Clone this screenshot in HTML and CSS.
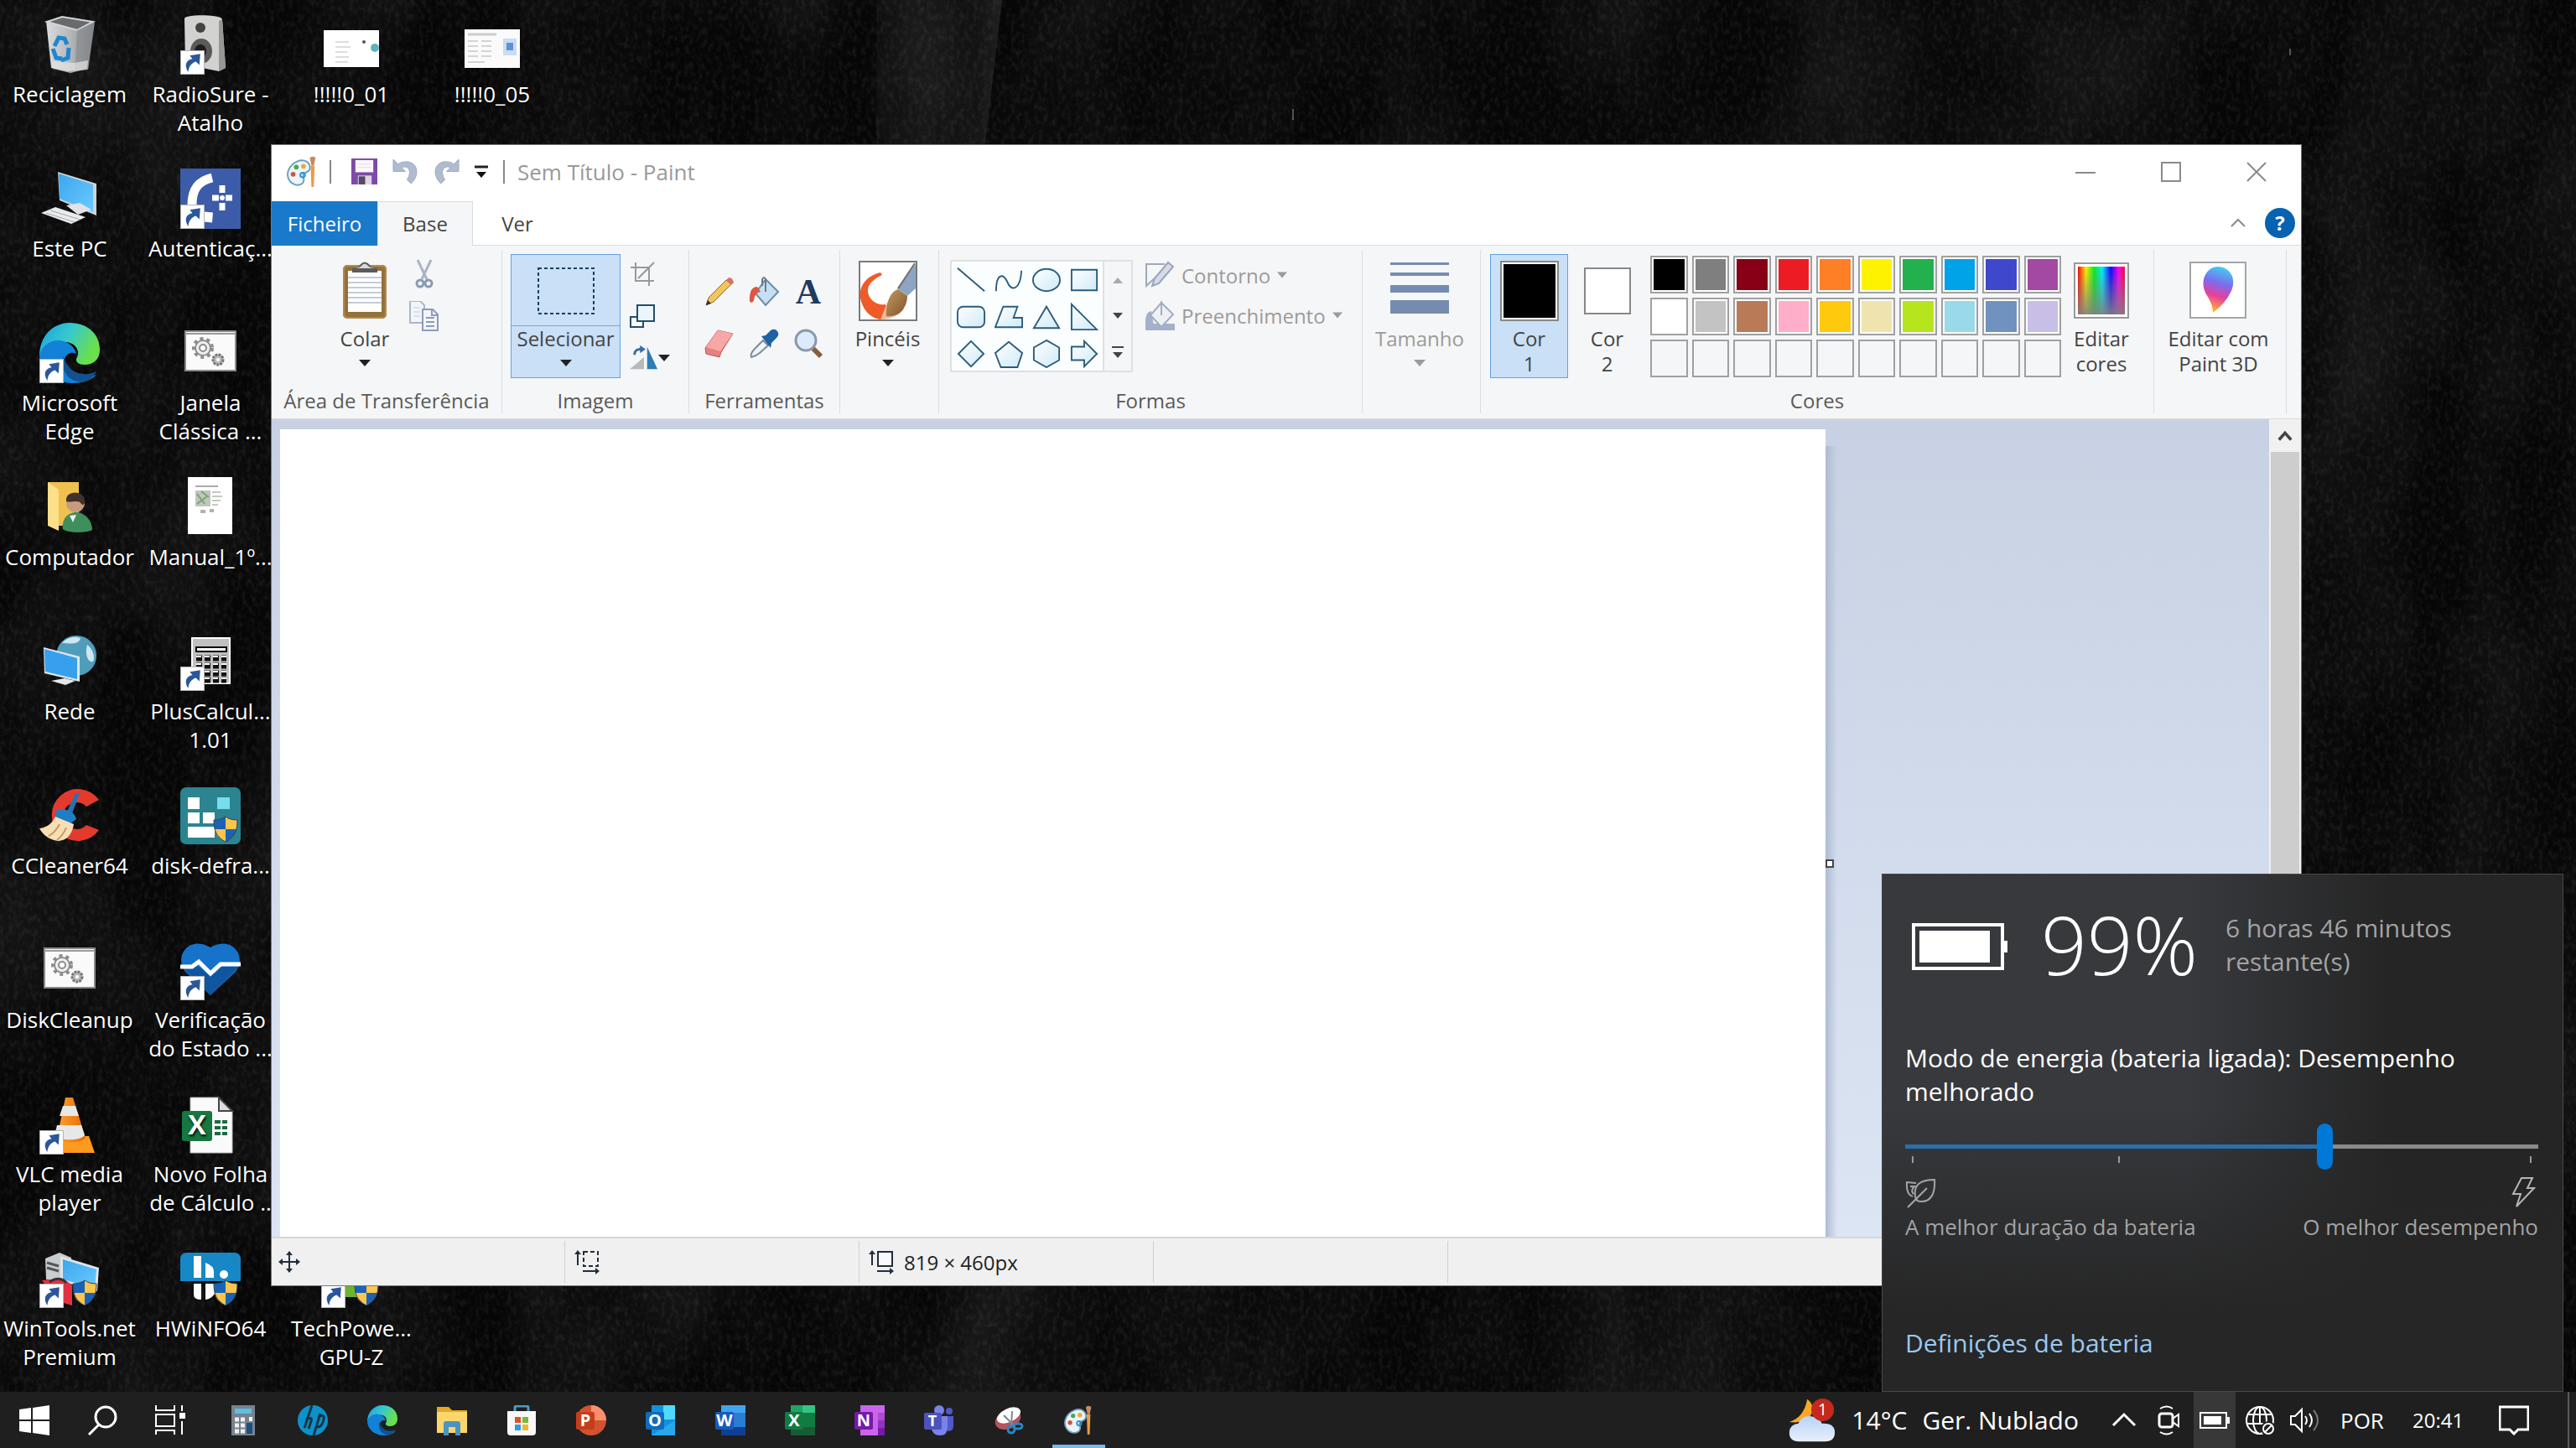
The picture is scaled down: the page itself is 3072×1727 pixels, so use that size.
FILE: index.html
```html
<!DOCTYPE html>
<html lang="pt">
<head>
  <meta charset="UTF-8">
  <title>Sem Título - Paint</title>
  <link rel="stylesheet" href="styles.css">
</head>
<body>

  <!-- shared symbols and gradients -->
  <svg class="defs" aria-hidden="true">
    <defs>
      <linearGradient id="gEdge" x1="0" y1="0" x2="1" y2="0.4"><stop offset="0" stop-color="#1b9de2"/><stop offset="0.5" stop-color="#35c8cf"/><stop offset="1" stop-color="#6be04a"/></linearGradient>
      <linearGradient id="gScreen" x1="0" y1="0" x2="1" y2="1"><stop offset="0" stop-color="#3aa7ee"/><stop offset="1" stop-color="#6cc9ff"/></linearGradient>
      <linearGradient id="gShape" x1="0" y1="0" x2="1" y2="1"><stop offset="0" stop-color="#fff"/><stop offset="1" stop-color="#cfeaf6"/></linearGradient>
      <linearGradient id="gBin" x1="0" y1="0" x2="1" y2="0"><stop offset="0" stop-color="#d9dbdd"/><stop offset="0.5" stop-color="#b4b7ba"/><stop offset="1" stop-color="#7f8386"/></linearGradient>
      <linearGradient id="gCone" x1="0" y1="0" x2="1" y2="0"><stop offset="0" stop-color="#ffa033"/><stop offset="1" stop-color="#e66a00"/></linearGradient>
      <linearGradient id="gRainbow" x1="0" y1="0" x2="1" y2="0"><stop offset="0" stop-color="#f00"/><stop offset="0.17" stop-color="#fe0"/><stop offset="0.35" stop-color="#0e2"/><stop offset="0.52" stop-color="#0ef"/><stop offset="0.7" stop-color="#10f"/><stop offset="0.87" stop-color="#f0e"/><stop offset="1" stop-color="#f03"/></linearGradient>
      <linearGradient id="gGrey" x1="0" y1="0" x2="0" y2="1"><stop offset="0" stop-color="#808080" stop-opacity="0"/><stop offset="1" stop-color="#808080" stop-opacity="0.9"/></linearGradient>
      <linearGradient id="gDrop" x1="0.6" y1="0" x2="0.4" y2="1"><stop offset="0" stop-color="#3fd0f0"/><stop offset="0.35" stop-color="#7b6cf0"/><stop offset="0.65" stop-color="#e8409a"/><stop offset="1" stop-color="#ffc020"/></linearGradient>
      <linearGradient id="gCloud" x1="0" y1="0" x2="0" y2="1"><stop offset="0" stop-color="#b9d3f7"/><stop offset="1" stop-color="#e6effc"/></linearGradient>
      <linearGradient id="gBrush" x1="0" y1="0" x2="1" y2="1"><stop offset="0" stop-color="#c39a62"/><stop offset="1" stop-color="#7d5329"/></linearGradient>
      <linearGradient id="gStreak" x1="0" y1="0" x2="1" y2="0"><stop offset="0" stop-color="#fff" stop-opacity="0.03"/><stop offset="0.8" stop-color="#fff" stop-opacity="0.05"/><stop offset="1" stop-color="#fff" stop-opacity="0.1"/></linearGradient>
      <filter id="clouds" x="0" y="0" width="100%" height="100%" color-interpolation-filters="sRGB">
        <feTurbulence type="fractalNoise" baseFrequency="0.008 0.004" numOctaves="4" seed="8"/>
        <feColorMatrix values="0 0 0 0 1  0 0 0 0 1  0 0 0 0 1  0.12 0 0 0 -0.04"/>
      </filter>
      <filter id="grain" x="0" y="0" width="100%" height="100%" color-interpolation-filters="sRGB">
        <feTurbulence type="fractalNoise" baseFrequency="0.18 0.12" numOctaves="3" seed="3"/>
        <feColorMatrix values="0 0 0 0 1  0 0 0 0 1  0 0 0 0 1  0.16 0 0 0 -0.07"/>
      </filter>
    </defs>

    <symbol id="shortcut" viewBox="0 0 28 28">
      <rect x="0.5" y="0.5" width="27" height="27" fill="#fff" stroke="#b5b5b5"/>
      <path d="M9 25C4 17 7 11 14 10L11 6l12-2-1 13-4-4c-6 2-8 6-9 12z" fill="#2b579a"/>
    </symbol>
    <symbol id="shield" viewBox="0 0 30 32">
      <path d="M15 1c4 3 9 4 14 4 0 13-3 20-14 26C4 25 1 18 1 5c5 0 10-1 14-4z" fill="#1b62b5"/>
      <path d="M15 1c4 3 9 4 14 4l-1 11H15zM15 16v15C7 27 3 23 2 16z" fill="#fcc54c"/>
      <path d="M15 1c4 3 9 4 14 4 0 13-3 20-14 26C4 25 1 18 1 5c5 0 10-1 14-4z" fill="none" stroke="#35424f"/>
    </symbol>
    <symbol id="edge" viewBox="0 0 72 72">
      <path d="M36 0c22 0 36 14 36 32 0 12-8 18-18 18-9 0-12-5-9-9 4-8-3-18-14-18C14 23 3 33 0 40 0 16 16 0 36 0z" fill="url(#gEdge)"/>
      <path d="M0 38c3-10 12-17 22-17 11 0 20 7 22 16-8-4-16 3-14 13 2 12 18 19 38 12-7 7-17 10-29 10C17 72 0 56 0 38z" fill="#1381d6"/>
      <path d="M29 40c-5 14 4 31 24 31 7-3 13-8 15-13-14 7-34 3-39-18z" fill="#12508f"/>
    </symbol>
    <symbol id="palette" viewBox="0 0 40 40">
      <path d="M14 7c9-4 17 1 16 9-1 5-6 4-8 7-2 4 3 6-1 11-5 5-15 2-18-6C0 20 5 11 14 7z" fill="#eaf5fb" stroke="#6d9fbb" stroke-width="2"/>
      <circle cx="13" cy="14" r="3" fill="#4aa84f"/><circle cx="22" cy="13" r="3" fill="#eda73a"/><circle cx="9" cy="23" r="3" fill="#d4533f"/><circle cx="21" cy="24" r="3" fill="none" stroke="#2f8fd0" stroke-width="2"/>
      <path d="M31 12h5l-1 27h-3z" fill="#eb9c46"/>
      <path d="M30 3c0-3 7-3 7 0l-2 9h-3z" fill="#c98a5d"/>
    </symbol>
    <symbol id="gears" viewBox="0 0 62 50">
      <rect x="1" y="1" width="60" height="47" fill="#fafafa" stroke="#8b8b8b" stroke-width="2"/>
      <path d="M1 4h60" stroke="#9a9a9a" stroke-width="2"/>
      <circle cx="22" cy="21" r="11" fill="none" stroke="#8d8d8d" stroke-width="4" stroke-dasharray="4 4"/>
      <circle cx="22" cy="21" r="9" fill="#efefef" stroke="#8d8d8d" stroke-width="2"/><circle cx="22" cy="21" r="4" fill="#fff" stroke="#8d8d8d" stroke-width="2"/>
      <circle cx="40" cy="35" r="6" fill="#bbb" stroke="#777" stroke-width="3" stroke-dasharray="3 1"/><circle cx="40" cy="35" r="2" fill="#fff"/>
    </symbol>
    <symbol id="down" viewBox="0 0 14 8"><path d="M0 0h14L7 8z" fill="currentColor"/></symbol>
  </svg>

  <main class="desktop">
    <svg class="wallpaper" aria-hidden="true">
      <rect width="100%" height="100%" filter="url(#clouds)"/>
      <rect width="100%" height="100%" filter="url(#grain)"/>
      <path d="M1045 0h150l-20 172h-130z" fill="url(#gStreak)"/>
      <path d="M1542 130v13M2731 58v8" stroke="#999" stroke-width="1"/>
    </svg>

    <div class="icons">
      <button class="item">
        <svg viewBox="0 0 72 72"><path d="M8 8l42-2 16 4-8 56-24 2-20-4z" fill="url(#gBin)"/><path d="M9 9l18-6 37 6-19 10z" fill="#6a6a6a" stroke="#d4d6d8" stroke-width="2"/><path d="M45 19l19-9-6 56-16 2z" fill="#85898c" opacity="0.6"/><path d="M14 56l28 2 16-3-1 10-20 5-21-5z" fill="#e3e4e5" opacity="0.7"/><path d="M18 38l5-10 7 1 3 7M16 41l4 11 7 1M35 40l-1 12-8 3" fill="none" stroke="#1e86d0" stroke-width="5"/></svg>
        <span>Reciclagem</span>
      </button>
      <button class="item">
        <svg viewBox="0 0 72 72"><path d="M5 5C6 0 48 0 50 6l4 58-8 4-40-8z" fill="#d2d2d0"/><path d="M50 6l4 58-8 4V8z" fill="#979797"/><circle cx="24" cy="16" r="6" fill="#444"/><ellipse cx="25" cy="44" rx="13" ry="15" fill="#5a5a5a"/><ellipse cx="24" cy="44" rx="7" ry="8" fill="#1d1d1d"/><use href="#shortcut" x="0" y="43" width="29" height="29"/></svg>
        <span>RadioSure -<br>Atalho</span>
      </button>
      <button class="item">
        <svg viewBox="0 0 72 72"><path d="M22 4l46 14v38l-44-18z" fill="#cdd3d8"/><path d="M23 6l41 13v33L24 36z" fill="url(#gScreen)"/><path d="M32 44l16-3 14 8-16 6z" fill="#dfe3e6"/><path d="M2 53l17-7 36 12-17 8z" fill="#e9ecee"/><path d="M8 53l34 11M13 50l36 11" stroke="#9fa7ac"/></svg>
        <span>Este PC</span>
      </button>
      <button class="item">
        <svg viewBox="0 0 72 72"><rect width="72" height="72" fill="#3c5ba9"/><path d="M38 11C20 15 14 26 14 43" fill="none" stroke="#fff" stroke-width="11"/><path d="M33 64l1-12" stroke="#fff" stroke-width="10"/><path d="M50 20v9M50 41v9M38 35h8M54 35h8" stroke="#fff" stroke-width="7"/><circle cx="50" cy="35" r="3" fill="#fff"/><use href="#shortcut" x="0" y="43" width="29" height="29"/></svg>
        <span>Autenticaç...</span>
      </button>
      <button class="item">
        <svg viewBox="0 0 72 72"><use href="#edge" width="72" height="72"/><use href="#shortcut" x="0" y="43" width="29" height="29"/></svg>
        <span>Microsoft<br>Edge</span>
      </button>
      <button class="item">
        <svg viewBox="0 0 72 72"><use href="#gears" x="5" y="9" width="62" height="50"/></svg>
        <span>Janela<br>Clássica ...</span>
      </button>
      <button class="item">
        <svg viewBox="0 0 72 72"><path d="M10 6h37v52H10z" fill="#f0c14f"/><path d="M10 6l13 9v49L10 58z" fill="#ffe08a"/><circle cx="43" cy="31" r="11" fill="#c99b7c"/><path d="M32 29c-2-14 24-14 22 1 0 3-3 4-4 2-3-6-12-1-18-3z" fill="#40312a"/><path d="M28 62c-2-14 8-20 16-20s19 8 19 21c-8 4-29 4-35-1z" fill="#3f8f5d"/><path d="M36 46l4 8 4-9z" fill="#eee"/></svg>
        <span>Computador</span>
      </button>
      <button class="item">
        <svg viewBox="0 0 72 72"><rect x="9" y="0" width="53" height="68" fill="#fff"/><path d="M18 11h27" stroke="#aaa" stroke-width="2"/><rect x="18" y="16" width="18" height="19" fill="#b9c9bb"/><path d="M20 32l12-9M20 20l9 12M25 17l9 7" stroke="#8c9c75" stroke-width="2"/><path d="M38 18h10M38 23h12M38 28h10M38 33h7" stroke="#c6c9c2" stroke-width="2"/><path d="M24 41h6M35 40h5" stroke="#b5b0a5" stroke-width="4"/></svg>
        <span>Manual_1º...</span>
      </button>
      <button class="item">
        <svg viewBox="0 0 72 72"><circle cx="44" cy="29" r="24" fill="#4f9dbb"/><path d="M27 14c8-9 18-8 22-6-2 9-14 6-22 6zM57 16c6 4 10 14 7 20-7 2-10-11-7-20z" fill="#cfe6ee"/><path d="M5 19l43 11v30L6 50z" fill="#e2e6e8"/><path d="M6 21l39 11v25L7 48z" fill="#36a0ee"/><path d="M14 59l16-3 13 3-12 5z" fill="#e4e8ea"/></svg>
        <span>Rede</span>
      </button>
      <button class="item">
        <svg viewBox="0 0 72 72"><rect x="14" y="8" width="45" height="54" fill="#c0c0c0" stroke="#fff" stroke-width="2"/><rect x="19" y="19" width="36" height="5" fill="#fff" stroke="#000" stroke-width="2"/><path d="M19 32h36M19 41h36M19 50h36M19 58h36" stroke="#111" stroke-width="7" stroke-dasharray="7 3"/><path d="M19 30h36M19 39h36M19 48h36M19 56h36" stroke="#fff" stroke-width="2" stroke-dasharray="6 4"/><use href="#shortcut" x="0" y="42" width="29" height="29"/></svg>
        <span>PlusCalcul...<br>1.01</span>
      </button>
      <button class="item">
        <svg viewBox="0 0 72 72"><path d="M71 17A31 31 0 1 0 71 53L56 47A16 16 0 1 1 56 25z" fill="#e23b2e"/><path d="M48 9l-5 0-11 24 6 3z" fill="#2c6fb3"/><path d="M20 30c10-5 22 1 24 10l-8 6-17-9z" fill="#1d7fc6"/><path d="M19 37l22 9c-2 12-8 19-18 20-10-1-18-6-23-15 9-1 15-6 19-14z" fill="#f8deb4"/><path d="M11 60c6-3 10-8 13-14M21 65c6-5 9-10 11-15" stroke="#c69b61" stroke-width="2" fill="none"/></svg>
        <span>CCleaner64</span>
      </button>
      <button class="item">
        <svg viewBox="0 0 72 72"><rect y="2" width="72" height="68" rx="7" fill="#2b8490"/><rect x="9" y="14" width="14" height="14" fill="#fff"/><rect x="44" y="14" width="15" height="14" fill="#77ddec"/><rect x="9" y="32" width="14" height="13" fill="#fff"/><rect x="27" y="32" width="14" height="13" fill="#fff"/><rect x="9" y="49" width="32" height="13" fill="#fff"/><use href="#shield" x="39" y="36" width="30" height="32"/></svg>
        <span>disk-defra...</span>
      </button>
      <button class="item">
        <svg viewBox="0 0 72 72"><use href="#gears" x="5" y="9" width="62" height="50"/></svg>
        <span>DiskCleanup</span>
      </button>
      <button class="item">
        <svg viewBox="0 0 72 72"><path d="M36 66L6 38C-8 20 10-6 36 9 62-6 80 20 66 38z" fill="#1673c9"/><path d="M2 32h20l14 12 14-12h20L36 66z" fill="#0f55a0"/><path d="M0 32h14l8-6 14 14 12-11h24" fill="none" stroke="#fff" stroke-width="5"/><use href="#shortcut" x="0" y="43" width="29" height="29"/></svg>
        <span>Verificação<br>do Estado ...</span>
      </button>
      <button class="item">
        <svg viewBox="0 0 72 72"><path d="M20 50h39l7 20H14z" fill="#ff9a1f"/><path d="M31 4h9l15 48c-4 7-30 7-34 0z" fill="url(#gCone)"/><path d="M28 14h15l4 12H24zM21 37h29l4 12c-5 7-30 7-36 0z" fill="#e8e8e8"/><use href="#shortcut" x="0" y="43" width="29" height="29"/></svg>
        <span>VLC media<br>player</span>
      </button>
      <button class="item">
        <svg viewBox="0 0 72 72"><path d="M12 4h34l16 16v50H12z" fill="#fafafa" stroke="#bbb"/><path d="M46 4v16h16z" fill="#ddd" stroke="#444" stroke-width="2"/><path d="M41 33h15M41 40h15M41 47h15" stroke="#1c6b42" stroke-width="4" stroke-dasharray="7 2"/><rect x="2" y="20" width="36" height="36" rx="3" fill="#16773f"/><text x="20" y="48" class="mark mark-big">X</text></svg>
        <span>Novo Folha<br>de Cálculo ..</span>
      </button>
      <button class="item">
        <svg viewBox="0 0 72 72"><path d="M7 12L24 5l14 6v30L8 37z" fill="#c9cbcd"/><path d="M9 17l14 4M9 23l14 4" stroke="#555" stroke-width="3"/><path d="M25 9l46 14-2 28-44-12z" fill="#dfe5e8"/><path d="M28 13l40 12-2 22-38-10z" fill="url(#gScreen)"/><path d="M3 38l26-2 10 8v24L22 63z" fill="#e03243"/><path d="M12 40q12-8 20 1" fill="none" stroke="#333" stroke-width="3"/><use href="#shield" x="39" y="37" width="30" height="32"/><use href="#shortcut" x="0" y="42" width="29" height="29"/></svg>
        <span>WinTools.net<br>Premium</span>
      </button>
      <button class="item">
        <svg viewBox="0 0 72 72"><path d="M0 39V13Q0 5 8 5h56q8 0 8 8v26z" fill="#1787c5"/><path d="M16 9h9v26h-9zM30 17q10 4 10 10v8H30z" fill="#fff"/><circle cx="52" cy="31" r="5" fill="#fff"/><path d="M16 42h9v19q-9 0-9-6zM30 42h11v12q-5 7-11 7z" fill="#fff"/><use href="#shield" x="39" y="37" width="30" height="32"/></svg>
        <span>HWiNFO64</span>
      </button>
      <button class="item col3">
        <svg class="thumb" viewBox="0 0 66 44"><rect width="66" height="44" fill="#fff"/><path d="M14 14h16M14 20h18M14 26h14M14 32h16M14 38h15" stroke="#ddd" stroke-width="2"/><circle cx="48" cy="14" r="2" fill="#456"/><circle cx="61" cy="21" r="5" fill="#5fb5bd"/></svg>
        <span>!!!!!0_01</span>
      </button>
      <button class="item col3 last">
        <svg viewBox="0 0 72 72"><rect x="28" y="22" width="24" height="36" fill="#6bb52c"/><use href="#shield" x="39" y="37" width="30" height="32"/><use href="#shortcut" x="0" y="42" width="29" height="29"/></svg>
        <span>TechPowe...<br>GPU-Z</span>
      </button>
      <button class="item col4">
        <svg class="thumb" viewBox="0 0 66 46"><rect width="66" height="46" fill="#fafafa"/><path d="M4 6h34" stroke="#ccc" stroke-width="3"/><path d="M4 14h12M20 14h12M4 20h12M20 20h12M4 26h12M20 26h12M4 32h12M20 32h12M4 39h20" stroke="#d2d4d7" stroke-width="2"/><rect x="46" y="11" width="16" height="20" fill="#c9dcf2"/><rect x="50" y="16" width="8" height="9" fill="#5c93d6"/></svg>
        <span>!!!!!0_05</span>
      </button>
    </div>

    <section class="window">
      <header class="titlebar">
        <svg class="app" viewBox="0 0 40 40"><use href="#palette" width="40" height="40"/></svg>
        <i class="bar"></i>
        <button class="quick" aria-label="Guardar"><svg viewBox="0 0 32 32"><path d="M0 0h32v32H0z" fill="#7d4aa8"/><path d="M5 2h22v15H5z" fill="#fbf8fd"/><path d="M8 7h16M8 11h16" stroke="#e2d9ea"/><path d="M8 21h17v11H8z" fill="#ded6e6"/><path d="M9 22h8v10H9z" fill="#574867"/></svg></button>
        <button class="quick" aria-label="Anular"><svg viewBox="0 0 32 32"><path d="M1 1v15h15l-5-5c8-3 14 4 7 15l5 5c13-13 6-28-7-27-4 0-7 1-9 3z" fill="#b0bbd0" stroke="#9daac3"/></svg></button>
        <button class="quick" aria-label="Refazer"><svg viewBox="0 0 32 32"><path d="M31 1v15H16l5-5c-8-3-14 4-7 15l-5 5C-4 18 3 3 16 4c4 0 7 1 9 3z" fill="#b0bbd0" stroke="#9daac3"/></svg></button>
        <button class="quick small" aria-label="Personalizar"><svg viewBox="0 0 16 16"><path d="M0 2h16" stroke="#222" stroke-width="3"/><path d="M2 8h12l-6 7z" fill="#111"/></svg></button>
        <i class="bar"></i>
        <h1>Sem Título - Paint</h1>
        <div class="controls">
          <button aria-label="Minimizar"><svg viewBox="0 0 24 24"><path d="M0 13h24"/></svg></button>
          <button aria-label="Maximizar"><svg viewBox="0 0 24 24"><path d="M1 1h22v22H1z"/></svg></button>
          <button aria-label="Fechar"><svg viewBox="0 0 24 24"><path d="M1 1l22 22M23 1L1 23"/></svg></button>
        </div>
      </header>

      <nav class="tabs">
        <button class="tab file">Ficheiro</button>
        <button class="tab active">Base</button>
        <button class="tab">Ver</button>
        <button class="collapse" aria-label="Recolher"><svg viewBox="0 0 20 12"><path d="M2 10l8-8 8 8" fill="none" stroke="#8a8a8a" stroke-width="2"/></svg></button>
        <button class="help" aria-label="Ajuda">?</button>
      </nav>

      <div class="ribbon">
        <div class="group clipboard">
          <div class="tools">
            <button class="big">
              <svg viewBox="0 0 70 72"><rect x="9" y="5" width="52" height="64" rx="5" fill="#94703a"/><rect x="10" y="6" width="50" height="62" rx="5" fill="none" stroke="#b38a4d" stroke-width="2"/><path d="M15 12h40v49H15z" fill="#fff"/><path d="M15 20h40M15 26h40M15 32h40M15 38h40M15 44h40M15 50h40" stroke="#c3ccd8" stroke-width="2"/><path d="M20 14V9q8-1 9-4 6-7 12 0 1 3 9 4v5z" fill="#5b5b5b"/><path d="M23 9q7-1 8-3 4-5 8 0 1 2 8 3z" fill="#d9d9d9"/></svg>
              <span>Colar</span><svg class="arrow"><use href="#down"/></svg>
            </button>
            <div class="stack pair">
              <button aria-label="Cortar"><svg viewBox="0 0 36 36"><path d="M10 1l11 23M26 1L15 24" stroke="#aab4c4" stroke-width="3"/><circle cx="13" cy="29" r="4" fill="none" stroke="#8c9ab3" stroke-width="3"/><circle cx="23" cy="29" r="4" fill="none" stroke="#8c9ab3" stroke-width="3"/></svg></button>
              <button aria-label="Copiar"><svg viewBox="0 0 36 36"><path d="M1 0h12l5 5v21H1z" fill="#f3f5f9" stroke="#aab6ca" stroke-width="2"/><path d="M5 8h8M5 13h8M5 18h8" stroke="#c4ccda"/><path d="M16 10h12l6 6v19H16z" fill="#f3f5f9" stroke="#8d9cb8" stroke-width="2"/><path d="M27 10v7h7M20 20h10M20 25h10M20 30h10" fill="none" stroke="#8d9cb8" stroke-width="2"/></svg></button>
            </div>
          </div>
          <h2>Área de Transferência</h2>
        </div>

        <div class="group image">
          <div class="tools">
            <button class="big selected">
              <svg viewBox="0 0 70 72"><path d="M2 9h66v54H2z" fill="none" stroke="#14405f" stroke-width="2" stroke-dasharray="4 3"/></svg>
              <span>Selecionar</span><svg class="arrow"><use href="#down"/></svg>
            </button>
            <div class="stack">
              <button aria-label="Recortar"><svg viewBox="0 0 30 30"><path d="M1 7h22v22M7 1v22h22M10 20L29 1" fill="none" stroke="#97999f" stroke-width="2"/></svg></button>
              <button aria-label="Redimensionar"><svg viewBox="0 0 30 30"><path d="M1 16h15v12H1z" fill="#fff" stroke="#1f4f6b" stroke-width="2"/><path d="M9 2h20v19H9z" fill="#eaf6fb" stroke="#1f4f6b" stroke-width="2"/></svg></button>
              <button class="rotate" aria-label="Rodar"><svg viewBox="0 0 36 30"><path d="M18 29V14L0 29z" fill="#b9b9b9"/><path d="M22 29V1l13 28z" fill="#2c7cb8"/><path d="M6 11q0-8 9-7" fill="none" stroke="#3b6e9b" stroke-width="3"/><path d="M13-1l7 5-7 5z" fill="#3b6e9b"/></svg><svg class="arrow"><use href="#down"/></svg></button>
            </div>
          </div>
          <h2>Imagem</h2>
        </div>

        <div class="group toolset">
          <div class="tools grid">
            <button aria-label="Lápis"><svg viewBox="0 0 36 36"><path d="M2 34l3-9L26 4l6 5-21 21z" fill="#f2c55c" stroke="#8b6a32"/><path d="M26 4l3-3q5 0 6 6l-3 3z" fill="#d8716b"/><path d="M2 34l2-6 4 4z" fill="#333"/></svg></button>
            <button aria-label="Preencher"><svg viewBox="0 0 36 36"><path d="M20 3l15 15-15 16L8 20z" fill="#c7dff2" stroke="#6d8ca8" stroke-width="2"/><path d="M20 18V3q-2-4-4 0v8" fill="none" stroke="#6d7a86" stroke-width="2"/><path d="M10 12Q0 12 1 30q4 2 5-2 1-9 8-10z" fill="#d9583e"/></svg></button>
            <button aria-label="Texto"><svg viewBox="0 0 36 36"><text x="18" y="32" class="serif">A</text></svg></button>
            <button aria-label="Borracha"><svg viewBox="0 0 36 36"><path d="M1 23L16 2l18 4-14 22-2 6-16-4z" fill="#e98080" stroke="#b95c5c"/><path d="M16 2l18 4-15 21-17-5z" fill="#f6a8a6"/></svg></button>
            <button aria-label="Seletor de cores"><svg viewBox="0 0 36 36"><path d="M3 34q-2-4 5-11l9-9 6 6-10 9q-5 4-10 5z" fill="#eef4f8" stroke="#7d8b96" stroke-width="2"/><path d="M15 9l5-1 6-6q5-3 8 1 3 4-1 8l-6 6-1 6z" fill="#1c62a5"/></svg></button>
            <button aria-label="Lupa"><svg viewBox="0 0 36 36"><path d="M23 23l10 10" stroke="#8a5e3b" stroke-width="6"/><circle cx="15" cy="14" r="12" fill="#dcebfa" stroke="#8b98ad" stroke-width="3"/></svg></button>
          </div>
          <h2>Ferramentas</h2>
        </div>

        <div class="group brushes">
          <div class="tools">
            <button class="big">
              <svg viewBox="0 0 70 72"><rect x="1" y="1" width="68" height="70" fill="#fff" stroke="#7a7a7a" stroke-width="2"/><path d="M68 4L46 33l12 9 10-9z" fill="#8ea4c3"/><path d="M67 3L47 33" stroke="#6c6c6c" stroke-width="2"/><path d="M26 14C8 18 0 32 2 44c2 12 10 24 24 26l10-4-4-14C20 54 10 44 11 34c1-7 8-13 17-17z" fill="#ef5a28"/><path d="M26 70c10 0 22-4 28-12l-20-8z" fill="#f4b79a"/><path d="M33 66c-1-18 6-30 14-32l11 8c0 14-10 26-25 24z" fill="url(#gBrush)"/></svg>
              <span>Pincéis</span><svg class="arrow"><use href="#down"/></svg>
            </button>
          </div>
        </div>

        <div class="group shapes">
          <div class="tools">
            <div class="gallery">
              <div class="forms">
                <button aria-label="Linha"><svg viewBox="0 0 36 36"><path d="M1 3l34 29"/></svg></button>
                <button aria-label="Curva"><svg viewBox="0 0 36 36"><path d="M2 32C2 8 12 10 16 20c5 14 17 10 18-14" fill="none"/></svg></button>
                <button aria-label="Elipse"><svg viewBox="0 0 36 36"><ellipse cx="18" cy="18" rx="17" ry="14"/></svg></button>
                <button aria-label="Retângulo"><svg viewBox="0 0 36 36"><path d="M2 5h32v26H2z"/></svg></button>
                <button aria-label="Retângulo arredondado"><svg viewBox="0 0 36 36"><rect x="1" y="5" width="34" height="26" rx="7"/></svg></button>
                <button aria-label="Polígono"><svg viewBox="0 0 36 36"><path d="M11 5h18l-5 14h11v12H1z"/></svg></button>
                <button aria-label="Triângulo"><svg viewBox="0 0 36 36"><path d="M18 5l16 27H2z"/></svg></button>
                <button aria-label="Triângulo retângulo"><svg viewBox="0 0 36 36"><path d="M2 2v32h32z"/></svg></button>
                <button aria-label="Losango"><svg viewBox="0 0 36 36"><path d="M18 2l16 16-16 16L2 18z"/></svg></button>
                <button aria-label="Pentágono"><svg viewBox="0 0 36 36"><path d="M18 3l17 14-6 18H8L1 17z"/></svg></button>
                <button aria-label="Hexágono"><svg viewBox="0 0 36 36"><path d="M18 1l16 9v16l-16 9-16-9V10z"/></svg></button>
                <button aria-label="Seta"><svg viewBox="0 0 36 36"><path d="M2 9h16V2l16 16-16 16v-8H2z"/></svg></button>
              </div>
              <div class="scroller">
                <button class="dim" aria-label="Acima"><svg viewBox="0 0 14 14"><path d="M1 11h12L7 4z" fill="currentColor"/></svg></button>
                <button aria-label="Abaixo"><svg viewBox="0 0 14 14"><path d="M1 3h12l-6 7z" fill="currentColor"/></svg></button>
                <button aria-label="Mais"><svg viewBox="0 0 14 14"><path d="M0 0h14v2H0zM1 7h12l-6 7z" fill="currentColor"/></svg></button>
              </div>
            </div>
            <div class="options">
              <button disabled><svg viewBox="0 0 36 36"><path d="M24 5H2v26L26 9" fill="none" stroke="#9fa8ba" stroke-width="2"/><path d="M9 31l3-9L28 3l6 5-17 20z" fill="#d6dbe8" stroke="#9ba4b9" stroke-width="2"/></svg><span>Contorno</span><svg class="arrow"><use href="#down"/></svg></button>
              <button disabled><svg viewBox="0 0 36 36"><path d="M1 28h35v8H1z" fill="#a5b1c8"/><path d="M8 13Q0 14 1 30h10z" fill="#a5b1c8"/><path d="M20 3l14 14-14 15L7 18z" fill="#eef0f6" stroke="#a3adc2" stroke-width="2"/><path d="M20 18V1" stroke="#a3adc2" stroke-width="2"/></svg><span>Preenchimento</span><svg class="arrow"><use href="#down"/></svg></button>
            </div>
          </div>
          <h2>Formas</h2>
        </div>

        <div class="group size">
          <div class="tools">
            <button class="big" disabled>
              <svg viewBox="0 0 70 72"><path d="M0 2h70v3H0zM0 14h70v4H0zM0 29h70v9H0zM0 47h70v16H0z" fill="#758cb0"/></svg>
              <span>Tamanho</span><svg class="arrow"><use href="#down"/></svg>
            </button>
          </div>
        </div>

        <div class="group colors">
          <div class="tools">
            <button class="big current selected-color"><i class="chip black"></i><span>Cor<br>1</span></button>
            <button class="big current"><i class="chip white"></i><span>Cor<br>2</span></button>
            <div class="swatches" id="swatches"></div>
            <button class="big edit">
              <svg viewBox="0 0 70 72"><rect x="3" y="3" width="64" height="65" fill="#fff" stroke="#999" stroke-width="2"/><rect x="7" y="7" width="56" height="57" fill="url(#gRainbow)"/><rect x="7" y="7" width="56" height="57" fill="url(#gGrey)"/></svg>
              <span>Editar<br>cores</span>
            </button>
          </div>
          <h2>Cores</h2>
        </div>

        <div class="group paint3d">
          <div class="tools">
            <button class="big">
              <svg viewBox="0 0 70 72"><rect x="2" y="2" width="66" height="66" fill="#fff" stroke="#a5a5a5" stroke-width="2"/><path d="M29 62q0-10-8-22C12 23 22 7 35 7s23 13 16 29Q44 51 29 62z" fill="url(#gDrop)"/></svg>
              <span>Editar com<br>Paint 3D</span>
            </button>
          </div>
        </div>
      </div>

      <div class="workspace">
        <div class="stage">
          <div class="canvas"></div>
          <i class="shade"></i>
          <i class="handle"></i>
        </div>
        <div class="scrollbar">
          <button aria-label="Deslocar para cima"><svg viewBox="0 0 20 14"><path d="M2 12l8-9 8 9" fill="none" stroke="#444" stroke-width="4"/></svg></button>
          <i></i>
        </div>
      </div>

      <footer class="status">
        <div><svg viewBox="0 0 30 30"><path d="M15 3v24M3 15h24" stroke="#222d3d" stroke-width="2"/><path d="M15 2l4 5h-8zM15 28l4-5h-8zM2 15l5-4v8zM28 15l-5-4v8z" fill="#222d3d"/></svg></div>
        <div><svg viewBox="0 0 30 30"><path d="M11 3h17v17H11z" fill="none" stroke="#222d3d" stroke-width="2" stroke-dasharray="5 3"/><path d="M4 4v15M10 26h16" stroke="#222d3d" stroke-width="2"/><path d="M4 1l4 5H0zM30 26l-5-4v8z" fill="#222d3d"/></svg></div>
        <div><svg viewBox="0 0 30 30"><path d="M11 3h17v17H11z" fill="#f5fbff" stroke="#222d3d" stroke-width="2"/><path d="M4 4v15M10 26h16" stroke="#222d3d" stroke-width="2"/><path d="M4 1l4 5H0zM30 26l-5-4v8z" fill="#222d3d"/></svg><span>819 × 460px</span></div>
        <div></div>
        <div class="rest"></div>
      </footer>
    </section>

    <aside class="flyout">
      <div class="charge">
        <svg viewBox="0 0 116 58"><path d="M2 2h106v52H2z" fill="none" stroke="#fff" stroke-width="4"/><path d="M9 9h84v38H9z" fill="#fff"/><path d="M109 21h5v14h-5z" fill="#fff"/></svg>
        <strong>99%</strong>
        <p>6 horas 46 minutos restante(s)</p>
      </div>
      <label for="mode">Modo de energia (bateria ligada): Desempenho melhorado</label>
      <input type="range" id="mode" min="0" max="3" step="1" value="2">
      <div class="ticks"><i></i><i></i><i class="covered"></i><i></i></div>
      <div class="ends">
        <div><svg viewBox="0 0 38 38"><path d="M12 24C10 10 18 4 35 4c1 16-4 27-17 26q-5 0-6-6zM3 37L26 14M9 24Q1 22 2 7l11 1M6 12h5q-5 5-1 9" fill="none" stroke="#a5a5a5" stroke-width="2"/></svg><span>A melhor duração da bateria</span></div>
        <div><svg viewBox="0 0 38 38"><path d="M18 2h13l-6 12h8L12 36l5-15H8z" fill="none" stroke="#b5b5b5" stroke-width="2"/></svg><span>O melhor desempenho</span></div>
      </div>
      <a href="#">Definições de bateria</a>
    </aside>
  </main>

  <footer class="taskbar">
    <div class="system">
      <button aria-label="Iniciar"><svg viewBox="0 0 36 36"><path d="M0 5l14-2v14H0zM16 3l20-3v17H16zM0 19h14v14L0 31zM16 19h20v17l-20-3z" fill="#fff"/></svg></button>
      <button aria-label="Procurar"><svg viewBox="0 0 36 36"><circle cx="22" cy="14" r="12" fill="none" stroke="#fff" stroke-width="3"/><path d="M14 23L2 35" stroke="#fff" stroke-width="3"/></svg></button>
      <button aria-label="Vista de tarefas"><svg viewBox="0 0 36 36"><path d="M1 0v6h22V0M1 11h22v14H1zM1 35v-5h22v5M32 0v7M32 19v16" fill="none" stroke="#fff" stroke-width="2"/><path d="M29 9h7v7h-7z" fill="#fff"/></svg></button>
    </div>
    <div class="apps">
      <button aria-label="Calculadora"><svg viewBox="0 0 36 36"><path d="M4 0h28v36H4z" fill="#76838f"/><path d="M8 4h20v6H8z" fill="#5cc0e2"/><path d="M8 17h14M8 24h14M8 31h14" stroke="#f0f0f0" stroke-width="5" stroke-dasharray="5 2"/><path d="M25 14h4v5h-4z" fill="#fff"/><path d="M22 21h7v13h-7z" fill="#1d4e7c"/></svg></button>
      <button aria-label="HP"><svg viewBox="0 0 36 36"><circle cx="18" cy="18" r="18" fill="#0e91ca"/><path d="M17 0l-9 27M10 17q8-4 6 2l-3 9M27 10l-8 26M24 14q9-4 7 3-2 10-9 9" fill="none" stroke="#14364a" stroke-width="3"/></svg></button>
      <button aria-label="Edge"><svg viewBox="0 0 36 36"><use href="#edge" width="36" height="36"/></svg></button>
      <button aria-label="Explorador"><svg viewBox="0 0 36 36"><path d="M0 2h14l4 4h18v8H0z" fill="#e6a821"/><path d="M0 8h36v25H0z" fill="#fcd66d"/><path d="M8 36V22q0-3 3-3h14q3 0 3 3v14h-6V26h-8v10z" fill="#4a94c4"/></svg></button>
      <button aria-label="Loja"><svg viewBox="0 0 36 36"><path d="M10 8V3q0-2 2-2h12q2 0 2 2v5" fill="none" stroke="#4b9cc6" stroke-width="3"/><path d="M1 7h34v25q0 4-4 4H5q-4 0-4-4z" fill="#f8f8f8"/><path d="M10 14h7v7h-7z" fill="#e0512e"/><path d="M19 14h7v7h-7z" fill="#7cb73b"/><path d="M10 23h7v7h-7z" fill="#2c9fdb"/><path d="M19 23h7v7h-7z" fill="#f0b72e"/></svg></button>
      <button aria-label="PowerPoint"><svg viewBox="0 0 36 36"><circle cx="18" cy="18" r="18" fill="#d35230"/><path d="M18 0a18 18 0 0 1 18 18H18z" fill="#ff8f6b"/><rect x="0" y="8" width="22" height="21" rx="2" fill="#c43e1c"/><text x="11" y="25" class="mark">P</text></svg></button>
      <button aria-label="Outlook"><svg viewBox="0 0 36 36"><path d="M7 0h28v36H7z" fill="#1490df"/><path d="M21 0h14v17H21z" fill="#50d9ff"/><path d="M7 36l28-18v18z" fill="#28a8ea"/><rect x="0" y="8" width="22" height="21" rx="2" fill="#0f6cbd"/><text x="11" y="25" class="mark">O</text></svg></button>
      <button aria-label="Word"><svg viewBox="0 0 36 36"><path d="M7 0h29v36H7z" fill="#2b7cd3"/><path d="M7 0h29v9H7z" fill="#41a5ee"/><path d="M7 26h29v10H7z" fill="#103f91"/><rect x="0" y="8" width="22" height="21" rx="2" fill="#185abd"/><text x="11" y="25" class="mark">W</text></svg></button>
      <button aria-label="Excel"><svg viewBox="0 0 36 36"><path d="M7 0h29v36H7z" fill="#107c41"/><path d="M21 0h15v9H21z" fill="#33c481"/><path d="M7 0h14v9H7z" fill="#21a366"/><path d="M7 26h29v10H7z" fill="#185c37"/><rect x="0" y="8" width="22" height="21" rx="2" fill="#107c41"/><text x="11" y="25" class="mark">X</text></svg></button>
      <button aria-label="OneNote"><svg viewBox="0 0 36 36"><path d="M7 0h29v36H7z" fill="#ca64ea"/><path d="M28 9h8v9h-8z" fill="#ae4bd5"/><path d="M28 18h8v9h-8z" fill="#9332bf"/><path d="M28 27h8v9h-8z" fill="#7719aa"/><rect x="0" y="8" width="22" height="21" rx="2" fill="#7719aa"/><text x="11" y="25" class="mark">N</text></svg></button>
      <button aria-label="Teams"><svg viewBox="0 0 36 36"><circle cx="18" cy="6" r="6" fill="#7b83eb"/><circle cx="30" cy="7" r="4" fill="#5059c9"/><path d="M23 13h12v12q0 6-7 6z" fill="#5059c9"/><path d="M8 13h20v13q0 10-9 10T8 26z" fill="#7b83eb"/><rect x="0" y="9" width="21" height="20" rx="2" fill="#4b53bc"/><text x="10" y="25" class="mark mark-small">T</text></svg></button>
      <button aria-label="Recortes"><svg viewBox="0 0 36 36"><ellipse cx="17" cy="17" rx="16" ry="11" fill="#b4545c" transform="rotate(-25 17 17)"/><ellipse cx="18" cy="12" rx="15" ry="8" fill="#fff" transform="rotate(-25 18 12)"/><path d="M12 12l12 12M22 7l-1 17" stroke="#7c8791" stroke-width="2"/><circle cx="21" cy="29" r="4" fill="none" stroke="#2b86c8" stroke-width="3"/><ellipse cx="29" cy="25" rx="5" ry="3" fill="none" stroke="#2b86c8" stroke-width="3"/></svg></button>
      <button class="running" aria-label="Paint"><svg viewBox="0 0 36 36"><use href="#palette" width="36" height="36"/></svg></button>
    </div>

    <div class="tray">
      <button class="weather">
        <svg viewBox="0 0 60 56"><path d="M24 2c14 10 6 32-22 28 12-4 19-12 22-28z" fill="#f9a825"/><path d="M14 54q-13 0-12-12 1-9 11-10 4-10 16-9 10 1 13 9 16-1 16 11 0 11-12 11z" fill="url(#gCloud)"/><circle cx="43" cy="15" r="14" fill="#c5281c"/><text x="43" y="22" class="badge">1</text></svg>
        <span>14°C</span><span>Ger. Nublado</span>
      </button>
      <button aria-label="Mostrar ícones ocultos"><svg viewBox="0 0 36 36"><path d="M5 24l13-13 13 13" fill="none" stroke="#fff" stroke-width="3"/></svg></button>
      <button aria-label="Reunir agora"><svg viewBox="0 0 36 36"><rect x="6" y="10" width="16" height="16" rx="3" fill="none" stroke="#fff" stroke-width="3"/><path d="M22 16l7-5v14l-7-5M7 4q8-5 15 0M7 32q8 5 15 0" fill="none" stroke="#fff" stroke-width="2"/></svg></button>
      <button class="on" aria-label="Bateria"><svg viewBox="0 0 36 36"><path d="M1 9h31v18H1z" fill="none" stroke="#fff" stroke-width="2"/><path d="M5 13h21v10H5z" fill="#fff"/><path d="M33 14h3v8h-3z" fill="#fff"/></svg></button>
      <button aria-label="Rede"><svg viewBox="0 0 36 36"><g fill="none" stroke="#fff" stroke-width="2"><circle cx="18" cy="18" r="16"/><ellipse cx="18" cy="18" rx="8" ry="16"/><path d="M4 11h28M2 22h20M18 2v20"/></g><circle cx="28" cy="28" r="9" fill="#1f1f1f"/><circle cx="28" cy="28" r="6" fill="none" stroke="#fff" stroke-width="2"/><path d="M24 32l8-8" stroke="#fff" stroke-width="2"/></svg></button>
      <button aria-label="Volume"><svg viewBox="0 0 36 36"><path d="M1 13h5l8-8v26l-8-8H1z" fill="none" stroke="#fff" stroke-width="2"/><path d="M18 13q4 5 0 10M23 10q6 8 0 16" fill="none" stroke="#fff" stroke-width="2"/><path d="M28 6q10 12 0 24" fill="none" stroke="#777" stroke-width="2"/></svg></button>
      <button class="lang">POR</button>
      <button class="clock">20:41</button>
      <button aria-label="Notificações"><svg viewBox="0 0 36 36"><path d="M1 2h34v27H23l-5 5-5-5H1z" fill="none" stroke="#fff" stroke-width="3"/></svg></button>
      <i class="peek"></i>
    </div>
  </footer>

  <script>
    const colors = [
      "#000000", "#7f7f7f", "#880015", "#ed1c24", "#ff7f27", "#fff200", "#22b14c", "#00a2e8", "#3f48cc", "#a349a4",
      "#ffffff", "#c3c3c3", "#b97a57", "#ffaec9", "#ffc90e", "#efe4b0", "#b5e61d", "#99d9ea", "#7092be", "#c8bfe7"
    ];
    const box = document.getElementById("swatches");

    for (let i = 0; i < 30; i++) {
      const b = document.createElement("button");
      b.setAttribute("aria-label", colors[i] || "vazio");
      if (colors[i]) b.style.background = colors[i];
      else b.className = "empty";
      box.appendChild(b);
    }
  </script>
</body>
</html>
```
FILE: styles.css
```css
* {
  box-sizing: border-box;
}

body {
  margin: 0;
  height: 100vh;
  display: flex;
  flex-direction: column;
  overflow: hidden;
  background: #060606;
  font-family: "Open Sans", "Noto Sans", sans-serif;
  font-size: 24px;
  color: #444;
}

button {
  margin: 0;
  padding: 0;
  border: none;
  background: none;
  font: inherit;
  color: inherit;
}

svg {
  display: block;
  flex: none;
}

h1, h2, p {
  margin: 0;
  font-weight: 400;
}

.defs {
  position: absolute;
  width: 0;
  height: 0;
}

.mark {
  font: bold 20px "Open Sans", sans-serif;
  fill: #fff;
  text-anchor: middle;
}

.mark-big { font-size: 32px; }
.mark-small { font-size: 18px; }

.serif {
  font: bold 42px "Liberation Serif", serif;
  fill: #1d3b5e;
  text-anchor: middle;
}

.badge {
  font: 20px "Open Sans", sans-serif;
  fill: #fff;
  text-anchor: middle;
}

/* desktop */
.desktop {
  position: relative;
  flex: 1;
  min-height: 0;
}

.wallpaper {
  position: absolute;
  inset: 0;
  width: 100%;
  height: 100%;
}

.icons {
  position: relative;
  display: grid;
  grid-template-columns: repeat(4, 168px);
  grid-auto-rows: 184px;
  margin-left: -1px;
}

.item {
  display: flex;
  flex-direction: column;
  align-items: center;
  justify-content: flex-start;
  gap: 6px;
  padding-top: 17px;
  color: #fff;
  font-size: 26px;
  line-height: 34px;
  white-space: nowrap;
  text-shadow: 1px 2px 3px #000;
}

.item svg {
  width: 72px;
  height: 72px;
  overflow: visible;
}

.item:nth-child(odd) { grid-column: 1; }
.item:nth-child(even) { grid-column: 2; }

.item.col3 { grid-area: 1 / 3; }
.item.col3.last { grid-row: 9; }
.item.col4 { grid-area: 1 / 4; }

.item .thumb {
  width: 66px;
  height: 46px;
  margin: 18px 0 8px;
}

/* paint window */
.window {
  position: absolute;
  top: 172px;
  right: 327px;
  bottom: 126px;
  left: 323px;
  display: flex;
  flex-direction: column;
  background: #fff;
  border: 1px solid #777;
}

.titlebar {
  flex: none;
  display: flex;
  align-items: center;
  height: 67px;
  padding: 0 41px 4px 17px;
}

.app {
  width: 38px;
  height: 38px;
}

.bar {
  width: 2px;
  height: 28px;
  margin-left: 14px;
  background: #888;
}

.quick {
  margin-left: 18px;
}

.quick svg {
  width: 31px;
  height: 31px;
}

.bar + .quick {
  margin-left: 24px;
}

.quick.small svg {
  width: 16px;
  height: 16px;
}

.quick.small + .bar {
  margin-left: 18px;
}

h1 {
  margin-left: 15px;
  font-size: 26px;
  color: #999;
}

.controls {
  display: flex;
  gap: 78px;
  margin-left: auto;
}

.controls svg {
  width: 24px;
  height: 24px;
  fill: none;
  stroke: #8a8a8a;
  stroke-width: 2;
}

.tabs {
  flex: none;
  display: flex;
  align-items: center;
  height: 53px;
  padding-right: 7px;
  border-bottom: 1px solid #dadbdc;
}

.tab {
  width: 106px;
  height: 53px;
  border: 1px solid transparent;
  border-bottom: none;
}

.file {
  width: 126px;
  background: #1979ca;
  color: #fff;
}

.active {
  width: 114px;
  background: #f5f6f7;
  border-color: #dadbdc;
}

.collapse {
  margin-left: auto;
}

.collapse svg {
  width: 20px;
  height: 12px;
}

.help {
  width: 36px;
  height: 36px;
  margin-left: 22px;
  border-radius: 50%;
  background: #0563b1;
  color: #fff;
  font-weight: 700;
  line-height: 34px;
}

/* ribbon */
.ribbon {
  flex: none;
  display: flex;
  height: 207px;
  padding: 5px 0 6px;
  background: #f5f6f7;
  border-bottom: 1px solid #dadbdc;
}

.group {
  flex: none;
  display: flex;
  flex-direction: column;
  justify-content: space-between;
  border-right: 1px solid #dcdddf;
}

.group h2 {
  font-size: 24px;
  line-height: 30px;
  text-align: center;
  color: #5a5a5a;
}

.tools {
  display: flex;
  height: 154px;
  padding-top: 5px;
}

.clipboard { width: 275px; }
.image { width: 223px; }
.toolset { width: 180px; }
.brushes { width: 118px; }
.shapes { width: 505px; }
.size { width: 141px; }
.colors { width: 803px; }
.paint3d { width: 158px; }

.big {
  flex: none;
  display: flex;
  flex-direction: column;
  align-items: center;
  height: 148px;
  padding-top: 7px;
  border: 1px solid transparent;
  line-height: 30px;
}

.big > svg:first-child {
  width: 70px;
  height: 72px;
  margin-bottom: 6px;
}

.arrow {
  width: 14px;
  height: 8px;
  color: #222;
}

.big .arrow {
  margin-top: 10px;
}

:disabled,
:disabled .arrow {
  color: #9b9b9b;
}

.clipboard .tools { padding-left: 71px; }
.clipboard .big { width: 80px; }

.stack {
  display: flex;
  flex-direction: column;
  gap: 20px;
  padding: 9px 0 0 11px;
}

.stack svg {
  width: 30px;
  height: 30px;
}

.stack.pair {
  gap: 14px;
  padding: 6px 0 0 13px;
}

.stack.pair svg {
  width: 36px;
  height: 36px;
}

.image .tools { padding-left: 10px; }
.image .big { width: 131px; }

.selected {
  border-color: #62a2e4;
  background: linear-gradient(#c9e0f7 84px, #78a9d6 84px, #78a9d6 85px, #c9e0f7 85px);
}

.rotate {
  display: flex;
  align-items: center;
}

.stack .rotate svg { width: 34px; }

.stack .rotate .arrow {
  width: 14px;
  height: 8px;
}

.grid {
  display: grid;
  grid-template-columns: repeat(3, 53px);
  grid-template-rows: 62px 62px;
  justify-content: center;
  padding: 19px 2px 0 0;
}

.grid svg {
  width: 36px;
  height: 36px;
  margin: 0 auto;
  overflow: visible;
}

.brushes .tools,
.size .tools,
.paint3d .tools {
  justify-content: center;
  padding-right: 4px;
}

.shapes .tools {
  gap: 14px;
  padding: 12px 0 0 13px;
}

.gallery {
  display: flex;
  height: 134px;
  border: 2px solid #dfe0e2;
  background: #fbfeff;
}

.forms {
  display: grid;
  grid-template-columns: repeat(4, 45px);
  grid-template-rows: repeat(3, 44px);
}

.forms svg {
  width: 34px;
  height: 34px;
  margin: 0 auto;
  fill: url(#gShape);
  stroke: #2b5d7c;
  stroke-width: 2;
}

.scroller {
  display: flex;
  flex-direction: column;
  width: 34px;
  border-left: 2px solid #dfe0e2;
  background: #f5f6f7;
  color: #444;
}

.scroller button {
  flex: 1;
}

.scroller svg {
  width: 14px;
  height: 14px;
  margin: 0 auto;
}

.scroller .dim {
  color: #aaa;
}

.options button {
  display: flex;
  align-items: center;
  gap: 8px;
  height: 48px;
}

.options button:first-child {
  height: 36px;
  margin-bottom: 6px;
}

.options svg:first-child {
  width: 36px;
  height: 36px;
}

.options .arrow {
  width: 12px;
}

.colors .tools {
  padding-left: 11px;
}

.current {
  width: 93px;
}

.selected-color {
  border-color: #62a2e4;
  background: #c9e0f7;
}

.chip {
  width: 70px;
  height: 72px;
  margin-bottom: 6px;
  border: 2px solid #888;
  box-shadow: inset 0 0 0 2px #fff;
}

.black { background: #000; }

.white {
  width: 56px;
  height: 56px;
  margin: 8px 0 14px;
  background: #fff;
}

.swatches {
  flex: none;
  display: grid;
  grid-template-columns: repeat(10, 1fr);
  grid-template-rows: repeat(3, 45px);
  gap: 5px;
  width: 490px;
  margin: 2px 0 0 5px;
}

.swatches button {
  border: 2px solid #a0a0a0;
  box-shadow: inset 0 0 0 2px #fff;
}

.swatches .empty {
  box-shadow: none;
  background: #f5f6f7;
}

.edit {
  width: 96px;
}

/* drawing area */
.workspace {
  flex: 1;
  min-height: 0;
  display: flex;
  background: linear-gradient(#c7d1e3, #dce5f3);
}

.stage {
  position: relative;
  flex: 1;
  display: flex;
  overflow: hidden;
  padding: 12px 0 0 10px;
}

.canvas {
  width: 1843px;
  background: #fff;
}

.shade {
  width: 14px;
  margin-top: 20px;
  background: linear-gradient(90deg, #aebbd2, transparent);
}

.handle {
  position: absolute;
  top: 525px;
  left: 1853px;
  width: 10px;
  height: 10px;
  border: 2px solid #444;
  background: #fff;
}

.scrollbar {
  display: flex;
  flex-direction: column;
  width: 38px;
  padding: 0 2px;
  background: #f1f1f1;
}

.scrollbar button {
  height: 39px;
}

.scrollbar svg {
  width: 18px;
  height: 14px;
  margin: 0 auto;
}

.scrollbar i {
  flex: 1;
  background: #cdcdcd;
}

.status {
  flex: none;
  display: flex;
  height: 58px;
  padding: 3px 0;
  background: #f0f0f0;
  border-top: 2px solid #d7d7d7;
  color: #222;
}

.status div {
  display: flex;
  align-items: center;
  gap: 12px;
  width: 351px;
  padding-left: 11px;
  border-right: 1px solid #d0d0d0;
}

.status div:first-child {
  width: 350px;
  padding-left: 6px;
}

.status .rest {
  flex: 1;
  border: none;
}

.status svg {
  width: 30px;
  height: 30px;
}

/* battery flyout */
.flyout {
  position: absolute;
  right: 15px;
  bottom: 0;
  display: flex;
  flex-direction: column;
  width: 813px;
  height: 618px;
  padding: 44px 29px 0 27px;
  background:
    linear-gradient(transparent 45%, #262626 85%),
    linear-gradient(90deg, #37393d 45%, #252525 75%);
  border: 1px solid #484848;
  font-size: 26px;
  color: #a3a3a3;
}

.charge {
  display: flex;
  padding-left: 8px;
}

.charge svg {
  width: 116px;
  height: 58px;
  margin-top: 14px;
}

.charge strong {
  width: 220px;
  padding-left: 38px;
  font-size: 96px;
  font-weight: 300;
  line-height: 78px;
  color: #fff;
}

.charge p {
  width: 300px;
  margin-left: 38px;
  font-size: 30px;
  line-height: 40px;
}

.flyout label {
  margin-top: 75px;
  font-size: 30px;
  line-height: 40px;
  color: #fff;
}

.flyout input {
  appearance: none;
  width: 100%;
  height: 55px;
  margin: 18px 0 0;
  background: linear-gradient(90deg, #2a70ac 66%, #8a8a8a 66%) center / 100% 5px no-repeat;
}

.flyout input::-webkit-slider-thumb {
  appearance: none;
  width: 19px;
  height: 55px;
  border-radius: 10px;
  background: #0078d7;
}

.ticks {
  display: flex;
  justify-content: space-between;
  height: 8px;
  margin-top: -16px;
  padding: 0 8px;
}

.ticks i {
  width: 2px;
  background: #999;
}

.ticks .covered {
  visibility: hidden;
}

.ends {
  display: flex;
  justify-content: space-between;
  margin-top: 16px;
  line-height: 40px;
}

.ends svg {
  width: 38px;
  height: 38px;
  margin-bottom: 2px;
}

.ends div:last-child svg {
  margin-left: auto;
}

.flyout a {
  margin-top: 99px;
  font-size: 30px;
  line-height: 40px;
  color: #99c9ef;
  text-decoration: none;
}

/* taskbar */
.taskbar {
  flex: none;
  display: flex;
  justify-content: space-between;
  height: 67px;
  background: #1f1f1f;
  color: #fff;
}

.taskbar svg {
  width: 36px;
  height: 36px;
  margin: 0 auto;
}

.system,
.apps,
.tray {
  display: flex;
  align-items: stretch;
}

.system button {
  width: 81px;
}

.apps {
  margin: 0 auto 0 5px;
}

.apps button {
  width: 83px;
}

.running {
  position: relative;
}

.running::after {
  content: "";
  position: absolute;
  left: 11px;
  right: 9px;
  bottom: 0;
  height: 4px;
  background: #76b9ed;
}

.tray {
  gap: 4px;
}

.weather {
  display: flex;
  align-items: center;
  gap: 18px;
  margin-right: 25px;
  font-size: 30px;
}

.taskbar .weather svg {
  width: 58px;
  height: 56px;
}

.tray button:not(.weather) {
  width: 50px;
}

.tray .on {
  background: #383838;
}

.tray .lang {
  margin-left: 13px;
  font-size: 26px;
}

.tray .clock {
  margin: 0 42px 0 32px;
}

.peek {
  margin: 0 8px 0 35px;
  border-left: 2px solid #5a5a5a;
}
```
